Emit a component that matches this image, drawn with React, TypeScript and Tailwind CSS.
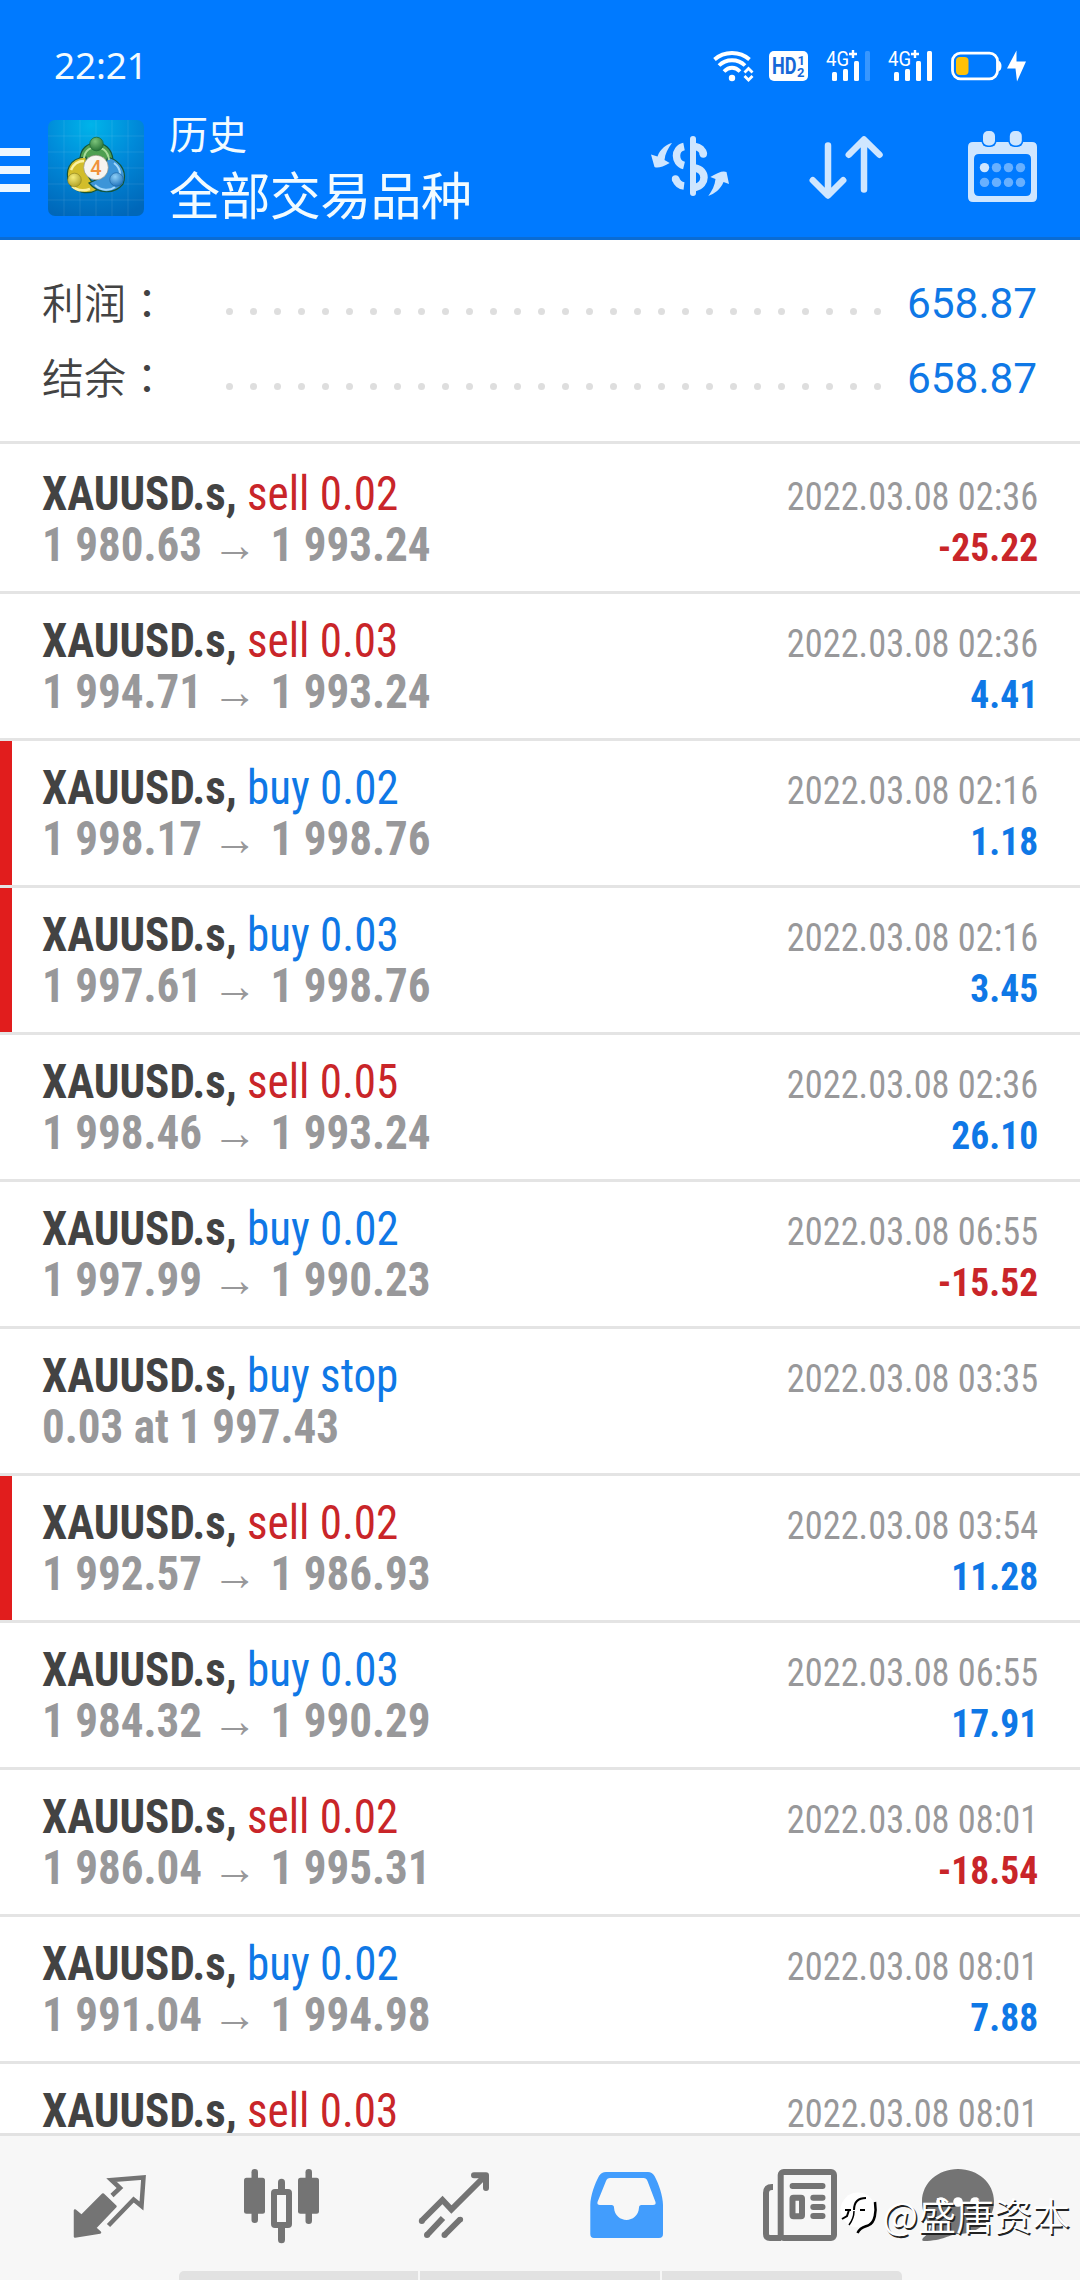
interface Deal {
  side: 'buy' | 'sell';
  label: string;
  open?: string;
  close?: string;
  note?: string;
  time: string;
  profit?: string;
  marked?: boolean;
}

const deals: Deal[] = [
  { side: 'sell', label: 'sell 0.02', open: '1 980.63', close: '1 993.24', time: '2022.03.08 02:36', profit: '-25.22' },
  { side: 'sell', label: 'sell 0.03', open: '1 994.71', close: '1 993.24', time: '2022.03.08 02:36', profit: '4.41' },
  { side: 'buy', label: 'buy 0.02', open: '1 998.17', close: '1 998.76', time: '2022.03.08 02:16', profit: '1.18', marked: true },
  { side: 'buy', label: 'buy 0.03', open: '1 997.61', close: '1 998.76', time: '2022.03.08 02:16', profit: '3.45', marked: true },
  { side: 'sell', label: 'sell 0.05', open: '1 998.46', close: '1 993.24', time: '2022.03.08 02:36', profit: '26.10' },
  { side: 'buy', label: 'buy 0.02', open: '1 997.99', close: '1 990.23', time: '2022.03.08 06:55', profit: '-15.52' },
  { side: 'buy', label: 'buy stop', note: '0.03 at 1 997.43', time: '2022.03.08 03:35' },
  { side: 'sell', label: 'sell 0.02', open: '1 992.57', close: '1 986.93', time: '2022.03.08 03:54', profit: '11.28', marked: true },
  { side: 'buy', label: 'buy 0.03', open: '1 984.32', close: '1 990.29', time: '2022.03.08 06:55', profit: '17.91' },
  { side: 'sell', label: 'sell 0.02', open: '1 986.04', close: '1 995.31', time: '2022.03.08 08:01', profit: '-18.54' },
  { side: 'buy', label: 'buy 0.02', open: '1 991.04', close: '1 994.98', time: '2022.03.08 08:01', profit: '7.88' },
  { side: 'sell', label: 'sell 0.03', time: '2022.03.08 08:01' },
];

const summary = [
  { label: '利润：', value: '658.87' },
  { label: '结余：', value: '658.87' },
];

function WifiIcon() {
  return (
    <svg className="h-8 w-[41px]" viewBox="0 0 41 32" fill="none" stroke="#fff" strokeWidth="3.8">
      <path d="M1.5 9.5C11 0.8 27 0.8 36.5 9.5" />
      <path d="M6 15.5C13 8.5 25 8.5 32 15.5" />
      <path d="M11 21.5C16 16.5 22 16.5 27 21.5" />
      <circle cx="19" cy="28" r="3.2" fill="#fff" stroke="none" />
      <path d="M31.5 22.500L35.500 18.500L39.500 22.500M31.500 26L35.500 30L39.500 26" strokeWidth="2.800" />
    </svg>
  );
}

function HdIcon() {
  return (
    <svg className="h-8 w-[39px]" viewBox="0 0 39 32">
      <rect y="1" width="39" height="30" rx="5" fill="#fff" />
      <g fill="#1668d8" fontFamily="Roboto" fontWeight="700">
        <text x="3" y="24.300" fontSize="23" textLength="24.500" lengthAdjust="spacingAndGlyphs">HD</text>
        <text x="28.500" y="14.500" fontSize="13">1</text>
        <text x="28" y="26.500" fontSize="13">2</text>
      </g>
    </svg>
  );
}

function SignalIcon({ full }: { full?: boolean }) {
  return (
    <svg className="h-8 w-11 overflow-visible" viewBox="0 0 44 32" fill="#fff">
      <text x="0" y="15.500" fontSize="20" fontFamily="Roboto" textLength="23" lengthAdjust="spacingAndGlyphs">4G</text>
      <path d="M23 4H31M27 0V8" stroke="#fff" strokeWidth="2.400" />
      <rect x="6" y="22" width="5" height="9" rx="1.5" />
      <rect x="17" y="19" width="5" height="12" rx="1.5" />
      <rect x="28" y="11" width="5" height="20" rx="1.5" />
      <rect x="39" y="1" width="5" height="30" rx="1.5" fillOpacity={full ? 1 : 0.22} />
    </svg>
  );
}

function BatteryIcon() {
  return (
    <svg className="h-8 w-[75px]" viewBox="0 0 75 32">
      <rect x="1.500" y="3.200" width="45" height="25.600" rx="8" fill="none" stroke="#fff" strokeWidth="2.800" />
      <path d="M47.500 10.500Q50.500 12 50.500 16T47.500 21.500Z" fill="#fff" />
      <rect x="5" y="7" width="12.500" height="18" rx="4" fill="#ffc107" />
      <path d="M65.500 0.500L56 18.500H64.500L66 31.500L75 11.500H65.500Z" fill="#fff" />
    </svg>
  );
}

function AppLogo() {
  return (
    <svg className="mt-2 ml-[18px] size-24" viewBox="0 0 96 96">
      <defs>
        <radialGradient id="logoBg" cx="0.45" cy="0.05" r="1">
          <stop offset="0" stopColor="#00b4ea" />
          <stop offset="0.5" stopColor="#0088d8" />
          <stop offset="1" stopColor="#0067b9" />
        </radialGradient>
        <radialGradient id="logoGreen" cx="0.4" cy="0.3" r="0.8">
          <stop offset="0" stopColor="#7cc47a" />
          <stop offset="1" stopColor="#1d6a30" />
        </radialGradient>
        <radialGradient id="logoYellow" cx="0.4" cy="0.3" r="0.8">
          <stop offset="0" stopColor="#f6ec7a" />
          <stop offset="1" stopColor="#a99a1c" />
        </radialGradient>
        <radialGradient id="logoBlue" cx="0.4" cy="0.3" r="0.8">
          <stop offset="0" stopColor="#8fd0f7" />
          <stop offset="1" stopColor="#1469b5" />
        </radialGradient>
      </defs>
      <rect width="96" height="96" rx="7" fill="url(#logoBg)" />
      <path
        d="M16 0V96M32 0V96M48 0V96M64 0V96M80 0V96M0 16H96M0 32H96M0 48H96M0 64H96M0 80H96"
        stroke="#fff"
        strokeOpacity="0.09"
      />
      <g stroke="#14553a" strokeWidth="1.200">
        <path d="M32 50V38C33 28 40 23 48 23S64 28 65 40V52L56 46H42Z" fill="#4f9f50" />
        <path d="M38 37C20 38 17 52 21 63C27 73 40 75 49 70L40 56Z" fill="#d2bd2b" />
        <path d="M60 37C75 42 79 54 75 64C66 75 50 74 41 63L52 58Z" fill="#3c95d8" />
      </g>
      <path d="M36 38C37 30 43 27 48 27S60 30 61 40" stroke="#a9dc9a" strokeWidth="2" fill="none" />
      <path d="M23 50C26 43 31 41 36 41M24 66C29 71 36 71 42 69" stroke="#fbf2a0" strokeWidth="2.500" fill="none" />
      <path d="M47 65C53 71 62 71 67 67M66 43C70 46 72 50 72 54" stroke="#a4d8fb" strokeWidth="2" fill="none" />
      <circle cx="48.500" cy="24" r="6.800" fill="url(#logoGreen)" stroke="#1f6b34" strokeWidth="0.800" />
      <circle cx="26.500" cy="60" r="6.800" fill="url(#logoYellow)" stroke="#8a8020" strokeWidth="0.600" />
      <circle cx="68.500" cy="59.500" r="6.800" fill="url(#logoBlue)" stroke="#1a5f9e" strokeWidth="0.600" />
      <circle cx="48" cy="47.500" r="12.300" fill="#f7f5f0" stroke="#8a8a7a" strokeWidth="0.600" />
      <text x="48" y="54.500" fontSize="20" fontFamily="Roboto" fontWeight="500" fill="#f0923a" textAnchor="middle">
        4
      </text>
    </svg>
  );
}

function CurrencyIcon() {
  return (
    <svg className="size-[84px]" viewBox="0 0 84 84" fill="none" stroke="#cfe6ff">
      <path d="M45 13V67" strokeWidth="6" strokeLinecap="round" />
      <path d="M47 20.500C51.500 21 55 24 55.500 28.500" strokeWidth="7.500" />
      <circle cx="55.300" cy="28" r="3.700" fill="#cfe6ff" stroke="none" />
      <path d="M36 20.500C26 22.500 26 37 36 39.500" strokeWidth="7.500" />
      <path d="M47 42C59 44 59 59 47 61.500" strokeWidth="7.500" />
      <path d="M27.500 52.500C29 57 32 59.500 36 60" strokeWidth="7.500" />
      <circle cx="27.500" cy="53" r="3.700" fill="#cfe6ff" stroke="none" />
      <g fill="#cfe6ff" stroke="none">
        <path d="M24 17C19 18 12 23 9.500 30.500L3 28.500L6.500 41Q11 43 21.700 37L16.500 34C17 28 20 22 24 17Z" />
        <path d="M60.300 70C66 68 73 63 75.500 56L81 58L78.500 46Q74 43.500 62.300 51L67.500 53C67 59 64 65 60.300 70Z" />
      </g>
    </svg>
  );
}

function SortIcon() {
  return (
    <svg
      className="size-[84px]"
      viewBox="0 0 84 84"
      fill="none"
      stroke="#cfe6ff"
      strokeWidth="6.500"
      strokeLinecap="round"
      strokeLinejoin="round"
    >
      <path d="M24 19.500V69M8.800 54.300L24 69.500L39.200 54.300" />
      <path d="M60 63.500V14M44.800 28.800L60 13.500L75.500 28.800" />
    </svg>
  );
}

function CalendarIcon() {
  return (
    <svg className="size-[84px]" viewBox="0 0 84 84" fill="#cfe6ff">
      <path
        fillRule="evenodd"
        d="M13 16H72Q77 16 77 21V71Q77 76 72 76H13Q8 76 8 71V21Q8 16 13 16ZM19 28Q14 28 14 33V65Q14 70 19 70H66Q71 70 71 65V33Q71 28 66 28Z"
      />
      <rect x="21.500" y="3" width="15" height="18" rx="6" fill="#007aff" />
      <rect x="48.300" y="3" width="15" height="18" rx="6" fill="#007aff" />
      <rect x="23" y="5" width="12" height="14.500" rx="5" />
      <rect x="49.800" y="5" width="12" height="14.500" rx="5" />
      {[41.6, 56.4].map((cy, row) =>
        [24.5, 36.5, 48.5, 60.5].map((cx, col) => (
          <circle key={`${row}-${col}`} cx={cx} cy={cy} r="4.700" fillOpacity={row + col === 0 ? 1 : 0.5} />
        ))
      )}
    </svg>
  );
}

function QuotesIcon() {
  return (
    <svg className="size-[84px]" viewBox="0 0 84 84">
      <path
        d="M7 46.500L13.600 52L35 30.500L47.500 42.500L27 64L32 68.500L7 72.500Z"
        fill="#747474"
        stroke="#747474"
        strokeWidth="2.500"
        strokeLinejoin="round"
      />
      <path d="M44 31.500L52 24L43.500 16L75.500 13.500L73.500 42L65.600 35.500L40.500 61.500" fill="none" stroke="#747474" strokeWidth="4.500" />
    </svg>
  );
}

function CandlesIcon() {
  return (
    <svg className="size-[84px]" viewBox="0 0 84 84" fill="#747474">
      <rect x="11.500" y="5" width="6.500" height="54" rx="3.200" />
      <rect x="4" y="13.700" width="21" height="36" rx="2.500" />
      <rect x="38" y="14.700" width="7" height="64.500" rx="3.500" />
      <rect x="34" y="28" width="15" height="33" rx="1" fill="#f7f7f7" stroke="#747474" strokeWidth="6" />
      <rect x="65.500" y="5" width="6.500" height="55" rx="3.200" />
      <rect x="58" y="13.700" width="21" height="36" rx="2.500" />
    </svg>
  );
}

function TrendIcon() {
  return (
    <svg className="size-[84px]" viewBox="0 0 84 84" fill="none" stroke="#747474" strokeWidth="6">
      <path d="M9.500 57L30.500 36L39.400 45.500L74 11" />
      <path d="M62 11.300H74V24" strokeLinecap="round" strokeLinejoin="round" />
      <circle cx="9.800" cy="57" r="3" fill="#747474" stroke="none" />
      <path d="M31 54L15 71M48.500 55L32.500 71" />
      <circle cx="15" cy="71" r="3" fill="#747474" stroke="none" />
      <circle cx="32.500" cy="71" r="3" fill="#747474" stroke="none" />
      <circle cx="48.300" cy="55.500" r="2.800" fill="#747474" stroke="none" />
    </svg>
  );
}

function InboxIcon() {
  return (
    <svg className="size-[84px]" viewBox="0 0 84 84" fill="#429dfd">
      <path
        fillRule="evenodd"
        d="M6.300 70V41C6.300 32 11 19 15 12Q17.500 8 22 8H64Q68 8 70.500 12C74.500 19 79 32 79 41V70Q79 74 75 74H10Q6.300 74 6.300 70ZM26 14Q23 14 22 17L13.500 38Q12.800 41 16 41H27.500Q30 41 30 43.500C31 60 54 60 55 43.500Q55 41 57.500 41H69Q72.300 41 71.500 38L63.500 17Q62.500 14 59.500 14Z"
      />
    </svg>
  );
}

function NewsIcon() {
  return (
    <svg className="size-[84px]" viewBox="0 0 84 84" fill="none" stroke="#747474" strokeWidth="6">
      <rect x="24.700" y="8" width="53.300" height="66" rx="3" />
      <path d="M17 23H16Q10 23 10 29V70Q10 74 14 74H25" />
      <path d="M36.600 22H66.500M57.300 33.800H66.500M57.300 43H66.500M57.300 52H66.500" strokeLinecap="round" />
      <rect x="36.500" y="33.700" width="9.500" height="18.500" rx="1" />
    </svg>
  );
}

function ChatIcon() {
  return (
    <svg className="mr-6 size-[84px]" viewBox="0 0 84 84" fill="#747474">
      <path d="M42 5C62 5 78 19 78 37.500C78 56 62 70 43 70C34 70 27 77 8 77Q5 77 7 74C12 70 15 66 15 61C9 55 6 47 6 37.500C6 19 22 5 42 5Z" />
      <g fill="#fff">
        <circle cx="25" cy="38" r="4.800" />
        <circle cx="42" cy="38" r="4.800" />
        <circle cx="59" cy="38" r="4.800" />
      </g>
    </svg>
  );
}

function Header() {
  return (
    <header className="h-60 border-b-[3px] border-[#0a6cd4] bg-[#007aff] text-[#f2fbff]">
      <div className="flex h-28 items-center justify-between pt-5 pr-[54px] pl-[54px]">
        <span className="pb-[3px] font-['Noto_Sans'] text-[37px] leading-none tracking-[-0.2px]">22:21</span>
        <div className="flex items-center">
          <WifiIcon />
          <div className="ml-[15px]"><HdIcon /></div>
          <div className="ml-[18px]"><SignalIcon /></div>
          <div className="ml-[18px]"><SignalIcon full /></div>
          <div className="ml-[19px]"><BatteryIcon /></div>
        </div>
      </div>
      <div className="flex items-start pr-9">
        <div className="mt-9 flex w-[30px] flex-col gap-[10px]">
          <span className="h-2 bg-[#eef8ff]" />
          <span className="h-2 bg-[#eef8ff]" />
          <span className="h-2 bg-[#eef8ff]" />
        </div>
        <AppLogo />
        <div className="-mt-[3px] ml-[25px] font-['Noto_Sans_CJK_SC',sans-serif] whitespace-nowrap">
          <div className="text-[39px] leading-[46px]">历史</div>
          <div className="text-[51px] leading-[76px] tracking-[-0.6px]">全部交易品种</div>
        </div>
        <div className="mt-[14px] ml-auto flex gap-[72px]">
          <CurrencyIcon />
          <SortIcon />
          <CalendarIcon />
        </div>
      </div>
    </header>
  );
}

function SummaryRow({ label, value }: { label: string; value: string }) {
  return (
    <div className="flex h-[75px] items-center pr-[43px] pl-[42px]">
      <span className="w-[184px] pb-[5px] font-['Noto_Sans_CJK_TC',sans-serif] text-[42px] leading-none font-[350] text-[#434343]">
        {label}
      </span>
      <div className="mt-4 flex gap-[17px]">
        {Array.from({ length: 28 }, (_, i) => (
          <span key={i} className="size-[7px] rounded-full bg-[#dedede]" />
        ))}
      </div>
      <span className="ml-auto origin-right scale-x-[0.985] font-['Roboto'] text-[43px] leading-none text-[#0f78e6]">
        {value}
      </span>
    </div>
  );
}

function DealRow({ deal, first }: { deal: Deal; first: boolean }) {
  const negative = deal.profit?.startsWith('-');

  return (
    <div className={`flex shrink-0 border-b-[3px] border-[#e4e4e4] ${first ? 'h-[150px] pt-[3px]' : 'h-[147px]'}`}>
      <div className={`w-3 ${deal.marked ? 'bg-[#e11d1d]' : ''}`} />
      <div className="flex flex-1 justify-between pr-[42px] pl-[30px] font-['Roboto_Condensed'] whitespace-nowrap">
        <div className="origin-left scale-x-[0.938] pt-[21px] text-[48px] leading-[51px]">
          <div>
            <span className="font-bold text-[#434343]">XAUUSD.s,</span>{' '}
            <span className={deal.side === 'buy' ? 'text-[#0f78e6]' : 'text-[#c92529]'}>{deal.label}</span>
          </div>
          <div className="font-bold text-[#98989a]">
            {deal.note}
            {deal.open && (
              <>
                {deal.open} <span className="mr-[3px] font-['Liberation_Sans'] font-bold">→</span> {deal.close}
              </>
            )}
          </div>
        </div>
        <div className="pt-6 text-right text-[39.500px] leading-[51px]">
          <div className="origin-right scale-x-[0.92] text-[#98989a]">{deal.time}</div>
          {deal.profit && (
            <div className={`origin-right scale-x-[0.95] font-bold ${negative ? 'text-[#c92529]' : 'text-[#0f78e6]'}`}>
              {deal.profit}
            </div>
          )}
        </div>
      </div>
    </div>
  );
}

function Watermark() {
  return (
    <div className="absolute top-[54px] right-[10px] flex items-center">
      <svg className="h-12 w-10" viewBox="0 0 40 48">
        <circle cx="19" cy="20" r="17.500" fill="#fff" />
        <path d="M3 29L8 26L10 20M6 20H12M15 20C15 12 19 8 27 8M21 20H26" fill="none" stroke="#000" strokeWidth="2" />
        <path d="M15 21C15 27 13 31 10 35" fill="none" stroke="#000" strokeWidth="1.500" />
        <path d="M36 12C37.500 22 36 32 30 35C27 37 22 36 18.500 43" fill="none" stroke="#000" strokeWidth="2.500" />
      </svg>
      <span className="ml-[3px] font-['Noto_Sans_CJK_SC',sans-serif] text-[38px] leading-none font-[350] text-white [text-shadow:1.5px_1.5px_0_#222]">
        @盛唐资本
      </span>
    </div>
  );
}

function TabBar() {
  return (
    <nav className="relative h-[147px] border-t-[3px] border-[#e2e2e2] bg-[#f7f7f7] pt-7">
      <div className="grid grid-cols-6 justify-items-center px-6">
        <QuotesIcon />
        <CandlesIcon />
        <TrendIcon />
        <InboxIcon />
        <NewsIcon />
        <ChatIcon />
      </div>
      <div className="mx-auto mt-[23px] flex h-[9px] w-[723px] gap-[2px] overflow-hidden rounded-t-[5px]">
        <span className="flex-1 bg-[#e2e2e2]" />
        <span className="flex-1 bg-[#e2e2e2]" />
        <span className="flex-1 bg-[#e2e2e2]" />
      </div>
      <Watermark />
    </nav>
  );
}

export default function App() {
  return (
    <div className="flex h-[2280px] w-[1080px] flex-col overflow-hidden bg-white">
      <Header />
      <section className="h-[204px] border-b-[3px] border-[#e4e4e4] pt-[26px]">
        {summary.map((item) => (
          <SummaryRow key={item.label} label={item.label} value={item.value} />
        ))}
      </section>
      <main className="flex min-h-0 flex-1 flex-col overflow-hidden">
        {deals.map((deal, index) => (
          <DealRow key={index} deal={deal} first={index === 0} />
        ))}
      </main>
      <TabBar />
    </div>
  );
}
